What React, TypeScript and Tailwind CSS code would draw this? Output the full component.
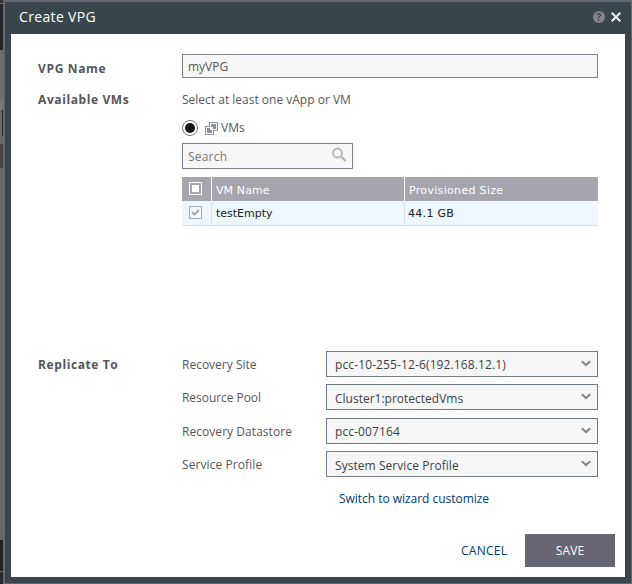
function VmIcon() {
  return (
    <svg width="13" height="13" viewBox="0 0 13 13" shapeRendering="crispEdges" className="ml-[7px] shrink-0">
      <path d="M4.5.5h8v8h-4v4h-8v-8h4z" fill="#fff" stroke="#8f9496" />
      <path d="M6 2h5v5H8V5H6zM2 6h3v2h2v3H2z" fill="#8b9294" />
    </svg>
  );
}

function Chevron() {
  return (
    <svg width="10" height="7" viewBox="0 0 10 7" className="mt-[8px] mr-[6px] shrink-0">
      <path d="M.8 1.2 5 5 9.2 1.2" fill="none" stroke="#85858d" strokeWidth="2.1" />
    </svg>
  );
}

function SelectRow({ label, value, spacing, labelSpacing, row, text }: {
  label: string;
  value: string;
  spacing: string;
  labelSpacing: string;
  row: string;
  text: string;
}) {
  return (
    <div className={`flex h-[26px] ${row}`}>
      <div className={`w-[144px] pt-px leading-[26px] ${labelSpacing}`}>{label}</div>
      <div className="flex h-[26px] w-[272px] justify-between border border-[#6f7b83] bg-[#f6f6f6] pl-2 text-[#3f3f3f]">
        <span className={`leading-[24px] ${text} ${spacing}`}>{value}</span>
        <Chevron />
      </div>
    </div>
  );
}

export default function App() {
  return (
    <div className="flex h-[584px] w-[632px] overflow-hidden bg-[#666675] font-['Open_Sans','Noto_Sans',sans-serif] text-[12px] text-[#55565a]">
      <div className="flex w-[3px] shrink-0 flex-col bg-[#696b66]">
        <div className="h-[3px] bg-[#303235]" />
        <div className="h-px bg-[#77787a]" />
        <div className="h-[46px] bg-[#222426]" />
        <div className="h-[50px] bg-[#6b6e6c]" />
        <div className="h-[10px] bg-[#777877]" />
        <div className="ml-[2px] h-[26px] bg-[#2d3033]" />
        <div className="h-[8px]" />
        <div className="h-[24px] bg-[#464646]" />
        <div className="h-[362px]" />
        <div className="h-[10px] bg-[#62686a]" />
        <div className="h-[31px] bg-[#202325]" />
        <div className="h-px bg-[#696b6c]" />
        <div className="h-[12px] bg-[#292c2e]" />
      </div>
      <div className="mt-[2px] ml-[2px] flex h-[581px] w-[626px] shrink-0 flex-col bg-[#3b464c] px-[6px]">
        <header className="flex h-[32px] items-center justify-between pr-[4px] pb-[2px] pl-[8px] text-white">
          <h1 className="text-[14px] leading-[20px] tracking-[0.35px]">Create VPG</h1>
          <div className="flex items-center gap-[6px]">
            <span className="flex size-[12px] items-center justify-center rounded-full bg-[#85858d] text-[10px] leading-[12px] font-bold text-[#3b464c]">?</span>
            <svg width="10" height="10" viewBox="0 0 10 10">
              <path d="m.7.7 8.6 8.6M9.3.7.7 9.3" stroke="#eef0f1" strokeWidth="2" />
            </svg>
          </div>
        </header>

        <main className="flex h-[543px] flex-col bg-white pr-[10px] pl-[27px]">
          <div className="flex pt-[20px]">
            <div className="w-[144px] pt-[5px] leading-[19px] font-bold tracking-[0.65px]">VPG Name</div>
            <div className="h-[24px] w-[416px] border border-[#7f828e] bg-[#f6f6f6] pl-[5px] leading-[24px]">myVPG</div>
          </div>

          <div className="flex pt-[12px]">
            <div className="w-[144px] leading-[20px] font-bold tracking-[0.6px]">Available VMs</div>
            <div className="w-[416px]">
              <div className="leading-[20px]">Select at least one vApp or VM</div>
              <div className="mt-[10px] flex h-[16px] items-center">
                <span className="flex size-[16px] items-center justify-center rounded-full border border-[#77797d] bg-white">
                  <span className="size-[10px] rounded-full bg-[#171717]" />
                </span>
                <VmIcon />
                <span className="ml-[3px]">VMs</span>
              </div>
              <div className="mt-[7px] flex h-[26px] w-[171px] justify-between border border-[#7f828e] bg-[#f6f6f6] pl-[5px] text-[#77787b]">
                <span className="leading-[26px] tracking-[0.2px]">Search</span>
                <svg width="16" height="16" viewBox="0 0 16 16" className="mt-[3px] mr-[5px]">
                  <circle cx="6.5" cy="6" r="4.5" fill="none" stroke="#b6b6ba" strokeWidth="1.8" />
                  <path d="m10 9.5 4.5 4.5" stroke="#b6b6ba" strokeWidth="2.3" />
                </svg>
              </div>

              <div className="mt-[8px] font-['DejaVu_Sans',sans-serif] text-[11px]">
                <div className="grid h-[24px] grid-cols-[29px_1px_192px_1px_193px] bg-[#a5a5ae] leading-[27px] text-white">
                  <div className="flex justify-center pt-[5px] pr-[2px]">
                    <span className="size-[13px] border border-white p-[2px]"><span className="block size-full bg-white" /></span>
                  </div>
                  <span className="h-[24px] bg-white" />
                  <span className="pl-[4px] tracking-[0.1px]">VM Name</span>
                  <span className="h-[24px] bg-white" />
                  <span className="pl-[4px] tracking-[0.32px]">Provisioned Size</span>
                </div>
                <div className="grid h-[25px] grid-cols-[29px_1px_192px_1px_193px] border-b border-[#dcdee0] bg-[#eff7fe] leading-[25px] text-[#202122]">
                  <div className="flex justify-center pt-[5px] pr-[2px]">
                    <svg width="13" height="13" viewBox="0 0 13 13">
                      <path d="M.5.5h12v12H.5z" fill="#f4f6f8" stroke="#a4a7ac" />
                      <path d="m3 6 2.4 2.6L10 4" fill="none" stroke="#a5a7ab" strokeWidth="2" />
                    </svg>
                  </div>
                  <span className="bg-[#dcdee0]" />
                  <span className="pl-[4px]">testEmpty</span>
                  <span className="bg-[#dcdee0]" />
                  <span className="pl-[3px] tracking-[0.3px]">44.1 GB</span>
                </div>
              </div>
            </div>
          </div>

          <div className="flex pt-[125px]">
            <div className="w-[144px] pt-[4px] leading-[20px] font-bold tracking-[0.6px]">Replicate To</div>
            <div className="w-[416px]">
              <SelectRow label="Recovery Site" value="pcc-10-255-12-6(192.168.12.1)" spacing="tracking-[0.12px]" labelSpacing="tracking-[0px]" row="" text="pt-px" />
              <SelectRow label="Resource Pool" value="Cluster1:protectedVms" spacing="tracking-[0px]" labelSpacing="tracking-[-0.05px]" row="mt-[7px]" text="pt-[2px]" />
              <SelectRow label="Recovery Datastore" value="pcc-007164" spacing="tracking-[0.1px]" labelSpacing="tracking-[0.05px]" row="mt-[8px]" text="pt-px" />
              <SelectRow label="Service Profile" value="System Service Profile" spacing="tracking-[0.05px]" labelSpacing="tracking-[0.08px]" row="mt-[7px]" text="pt-[2px]" />
              <a className="mt-[12px] block pl-[157px] leading-[20px] tracking-[-0.03px] text-[#003b75]">Switch to wizard customize</a>
            </div>
          </div>

          <footer className="mt-[25px] flex h-[33px] items-center justify-end">
            <button className="mr-[18px] w-[46px] whitespace-nowrap tracking-[0.25px] text-[#003b75]">CANCEL</button>
            <button className="h-[33px] w-[90px] bg-[#666675] text-white tracking-[0.15px]">SAVE</button>
          </footer>
        </main>
      </div>
    </div>
  );
}
